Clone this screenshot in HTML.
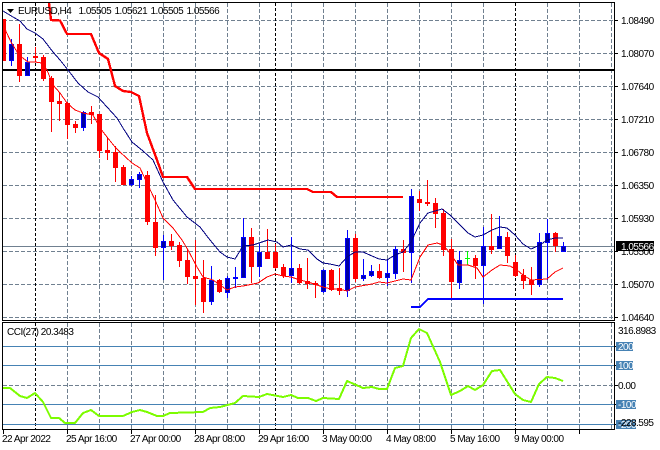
<!DOCTYPE html>
<html>
<head>
<meta charset="utf-8">
<title>EURUSD,H4</title>
<style>
html,body{margin:0;padding:0;background:#fff;width:660px;height:450px;overflow:hidden}
svg{display:block}
text{font-family:"Liberation Sans",sans-serif;font-size:10px;letter-spacing:-.5px;fill:#000}
</style>
</head>
<body>
<svg width="660" height="450" viewBox="0 0 660 450" xmlns="http://www.w3.org/2000/svg">
<rect width="660" height="450" fill="#fff"/>

<!-- main grid -->
<g shape-rendering="crispEdges" fill="none">
<path stroke="#708090" stroke-dasharray="4 2" d="M3 20.5H614M3 53.5H614M3 86.5H614M3 119.5H614M3 152.5H614M3 185.5H614M3 218.5H614M3 251.5H614M3 284.5H614M3 317.5H614"/>
<path stroke="#708090" stroke-dasharray="4 2" d="M67.5 3V320M99.5 3V320M131.5 3V320M163.5 3V320M195.5 3V320M227.5 3V320M259.5 3V320M291.5 3V320M323.5 3V320M355.5 3V320M387.5 3V320M419.5 3V320M451.5 3V320M483.5 3V320M547.5 3V320M579.5 3V320M611.5 3V320"/>
<path stroke="#000" stroke-dasharray="3 2" d="M35.5 3V320M275.5 3V320M515.5 3V320"/>
<path stroke="#708090" d="M3 246.5H614"/>
<path stroke="#000" stroke-width="2" d="M3 70H614"/>

<!-- sub window grid -->
<path stroke="#708090" stroke-dasharray="4 2" d="M67.5 323V429M99.5 323V429M131.5 323V429M163.5 323V429M195.5 323V429M227.5 323V429M259.5 323V429M291.5 323V429M323.5 323V429M355.5 323V429M387.5 323V429M419.5 323V429M451.5 323V429M483.5 323V429M547.5 323V429M579.5 323V429M611.5 323V429"/>
<path stroke="#000" stroke-dasharray="3 2" d="M35.5 323V429M275.5 323V429M515.5 323V429"/>
<path stroke="#708090" stroke-dasharray="4 2" d="M3 385.5H614"/>
<path stroke="#4682b4" d="M3 346.5H614M3 365.5H614M3 404.5H614M3 424.5H614"/>
</g>

<!-- candles -->
<g shape-rendering="crispEdges">
<!-- red wicks -->
<path fill="none" stroke="#f00" d="M3.5 19V61M19.5 24V82M35.5 47V62M43.5 55V81M51.5 76V132M59.5 92V121M67.5 102V139M75.5 121V133M91.5 106V124M99.5 114V158M107.5 138V160M115.5 146V182M123.5 165V185M147.5 171V225M155.5 195V256M171.5 234V250M179.5 242V267M187.5 249V284M195.5 240V305M203.5 260V313M219.5 279V293M251.5 228V283M267.5 229V259M275.5 244V269M283.5 264V278M299.5 264V284M307.5 258V289M315.5 281V298M331.5 269V291M339.5 268V295M355.5 234V282M379.5 264V279M403.5 240V272M419.5 191V211M427.5 180V206M435.5 198V228M443.5 209V256M451.5 239V298M475.5 255V279M491.5 214V254M507.5 232V263M515.5 255V277M523.5 269V289M531.5 267V295M555.5 232V252"/>
<!-- red bodies -->
<path fill="#f00" d="M3 19h3V61h-3zM17 44h5V76h-5zM33 56h5V58h-5zM41 57h5V79h-5zM49 78h5V102h-5zM57 101h5V104h-5zM65 103h5V125h-5zM73 124h5V128h-5zM89 112h5V115h-5zM97 114h5V151h-5zM105 150h5V153h-5zM113 152h5V168h-5zM121 167h5V185h-5zM145 175h5V222h-5zM153 222h5V248h-5zM169 241h5V246h-5zM177 245h5V261h-5zM185 260h5V277h-5zM193 276h5V279h-5zM201 278h5V302h-5zM217 280h5V292h-5zM249 237h5V267h-5zM265 252h5V259h-5zM273 252h5V268h-5zM281 267h5V276h-5zM297 268h5V283h-5zM305 281h5V284h-5zM313 283h5V285h-5zM329 270h5V290h-5zM337 288h5V291h-5zM353 238h5V279h-5zM377 271h5V278h-5zM401 249h5V253h-5zM417 199h5V203h-5zM425 202h5V204h-5zM433 203h5V214h-5zM441 213h5V250h-5zM449 249h5V282h-5zM473 258h5V266h-5zM489 246h5V250h-5zM505 237h5V256h-5zM513 262h5V276h-5zM521 275h5V281h-5zM529 280h5V285h-5zM553 233h5V246h-5z"/>
<!-- blue wicks -->
<path fill="none" stroke="#00f" d="M11.5 39V66M27.5 57V76M83.5 111V131M131.5 176V186M139.5 172V188M163.5 235V280M211.5 266V305M227.5 276V298M235.5 267V288M243.5 218V278M259.5 244V277M291.5 237V283M323.5 269V293M347.5 230V297M363.5 259V281M371.5 265V277M387.5 259V286M395.5 246V279M411.5 189V283M459.5 251V289M483.5 227V304M499.5 216V249M539.5 233V287M547.5 219V280M563.5 242V252"/>
<!-- blue bodies -->
<path fill="#0000a0" stroke="#00f" d="M9.5 44.5h4V60.5h-4zM25.5 62.5h4V75.5h-4zM81.5 112.5h4V127.5h-4zM129.5 179.5h4V184.5h-4zM137.5 174.5h4V179.5h-4zM161.5 241.5h4V247.5h-4zM209.5 280.5h4V301.5h-4zM225.5 278.5h4V292.5h-4zM233.5 277.5h4V278.5h-4zM241.5 237.5h4V277.5h-4zM257.5 252.5h4V266.5h-4zM289.5 268.5h4V275.5h-4zM321.5 270.5h4V291.5h-4zM345.5 238.5h4V290.5h-4zM361.5 275.5h4V278.5h-4zM369.5 271.5h4V275.5h-4zM385.5 273.5h4V277.5h-4zM393.5 249.5h4V273.5h-4zM409.5 196.5h4V252.5h-4zM457.5 260.5h4V282.5h-4zM481.5 246.5h4V265.5h-4zM497.5 236.5h4V248.5h-4zM537.5 242.5h4V284.5h-4zM545.5 233.5h4V242.5h-4zM561.5 246.5h4V251.5h-4z"/>
<!-- doji -->
<path fill="none" stroke="#00ff00" d="M467.5 251V265M465 258.5H470"/>
</g>

<g shape-rendering="crispEdges" fill="none">
<!-- thick red -->
<path stroke="#f00" stroke-width="2.4" stroke-linejoin="round" d="M49 3L51 20L60 20.5L67 34L91 34L99 53L108 59L115 86L123 91L131 92L139 96L147 133L157 160L163 177L187 177L195 189L307 189L313 192L331 192L337 197L403 197"/>
<!-- thick blue -->
<path stroke="#00f" stroke-width="2" d="M411 307L420 307L428 299L563 299"/>
<!-- thin navy MA -->
<path stroke="#000080" stroke-width="1" d="M3 11L13 17L20 21L27 29L35 33L43 39L53 52L60 60L68 70L78 83L88 92L98 97L107 107L117 118L123 128L132 142L143 151L153 160L163 182L173 200L187 217L200 227L210 240L220 252L227 257L235 259L243 246L253 245L259 243L268 240L277 242L283 247L291 245L300 249L308 250L317 259L323 263L330 264L339 266L347 257L355 252L363 252L372 256L379 259L387 260L395 255L403 252L411 242L420 223L428 213L442 209L450 215L458 223L468 233L475 237L483 235L492 230L500 227L507 228L515 235L523 244L531 249L540 245L547 240L555 238L563 238"/>
<!-- thin red MA -->
<path stroke="#f00" stroke-width="1" d="M3 25L11 42L19 55L28 62L35 62L42 63L47 70L53 85L60 93L67 103L75 110L83 113L93 115L100 128L107 137L115 147L120 152L132 163L140 168L147 183L155 200L163 218L173 228L182 240L188 250L197 267L203 277L213 280L220 285L227 290L235 287L243 286L258 283L267 277L275 274L283 276L291 277L300 280L308 282L323 287L331 289L339 289L347 291L355 287L372 284L379 282L387 283L395 281L403 279L411 280L420 257L428 245L437 243L443 245L450 253L458 265L468 265L477 268L483 277L492 270L500 265L510 266L517 270L523 275L531 280L547 279L555 272L563 268"/>
<!-- CCI -->
<path stroke="#7cfc00" stroke-width="2" stroke-linejoin="round" d="M3 388L10 388L15 392L20 396L27 398L35 393L43 402L51 418L59 418L65 423L75 423L83 413L91 410L99 416L123 416L132 412L140 410L147 412L157 416L163 416L170 413L203 412L210 408L220 407L235 403L243 396L259 397L267 394L283 397L291 395L298 398L308 398L316 401L323 398L339 399L347 381L363 388L372 387L379 389L387 389L395 368L403 366L411 338L419 329L427 333L440 362L451 395L460 391L468 386L475 390L483 385L492 371L500 370L515 394L523 400L531 402L539 384L547 377L555 378L563 381"/>
</g>

<!-- frames & ticks -->
<g shape-rendering="crispEdges" fill="none" stroke="#000">
<path d="M2.5 2V320M2 2.5H615M614.5 2V320M2 320.5H615M2.5 322V429M2 322.5H615M614.5 322V429M2 429.5H615"/>
<path d="M615 20.5H618M615 53.5H618M615 86.5H618M615 119.5H618M615 152.5H618M615 185.5H618M615 218.5H618M615 251.5H618M615 284.5H618M615 317.5H618"/>
<path d="M615 346.5H618M615 365.5H618M615 385.5H618M615 404.5H618M615 424.5H618"/>
<path d="M3.5 430V434M67.5 430V434M131.5 430V434M195.5 430V434M259.5 430V434M323.5 430V434M387.5 430V434M451.5 430V434M515.5 430V434M579.5 430V434"/>
</g>

<!-- header -->
<path d="M7 9H14L10.5 13Z" fill="#000"/>
<text x="18" y="14">EURUSD,H4</text>
<text x="78.5" y="14">1.05505</text>
<text x="114.5" y="14">1.05621</text>
<text x="150.5" y="14">1.05505</text>
<text x="186.5" y="14">1.05566</text>
<text x="7" y="335">CCI(27) 20.3483</text>

<!-- price axis -->
<text x="621" y="24">1.08490</text>
<text x="621" y="57">1.08070</text>
<text x="621" y="90">1.07640</text>
<text x="621" y="123">1.07210</text>
<text x="621" y="156">1.06780</text>
<text x="621" y="189">1.06350</text>
<text x="621" y="222">1.05930</text>
<text x="621" y="255">1.05500</text>
<text x="621" y="288">1.05070</text>
<text x="621" y="321">1.04640</text>
<rect x="616" y="241" width="38" height="10" fill="#000" shape-rendering="crispEdges"/>
<text x="621" y="250" style="fill:#fff">1.05566</text>

<!-- CCI axis -->
<text x="618" y="334">316.8983</text>
<g shape-rendering="crispEdges" fill="#4682b4">
<rect x="616" y="342" width="17" height="9"/>
<rect x="616" y="361" width="17" height="9"/>
<rect x="616" y="400" width="20" height="9"/>
<rect x="616" y="420" width="20" height="9"/>
</g>
<text x="618" y="350" style="fill:#fff">200</text>
<text x="618" y="369" style="fill:#fff">100</text>
<text x="618" y="389">0.00</text>
<text x="618" y="408" style="fill:#fff">-100</text>
<text x="618" y="428" style="fill:#fff">-200</text>
<text x="618" y="426">-228.595</text>

<!-- time axis -->
<text x="2" y="442">22 Apr 2022</text>
<text x="66" y="442">25 Apr 16:00</text>
<text x="130" y="442">27 Apr 00:00</text>
<text x="194" y="442">28 Apr 08:00</text>
<text x="258" y="442">29 Apr 16:00</text>
<text x="322" y="442">3 May 00:00</text>
<text x="386" y="442">4 May 08:00</text>
<text x="450" y="442">5 May 16:00</text>
<text x="514" y="442">9 May 00:00</text>
</svg>
</body>
</html>
